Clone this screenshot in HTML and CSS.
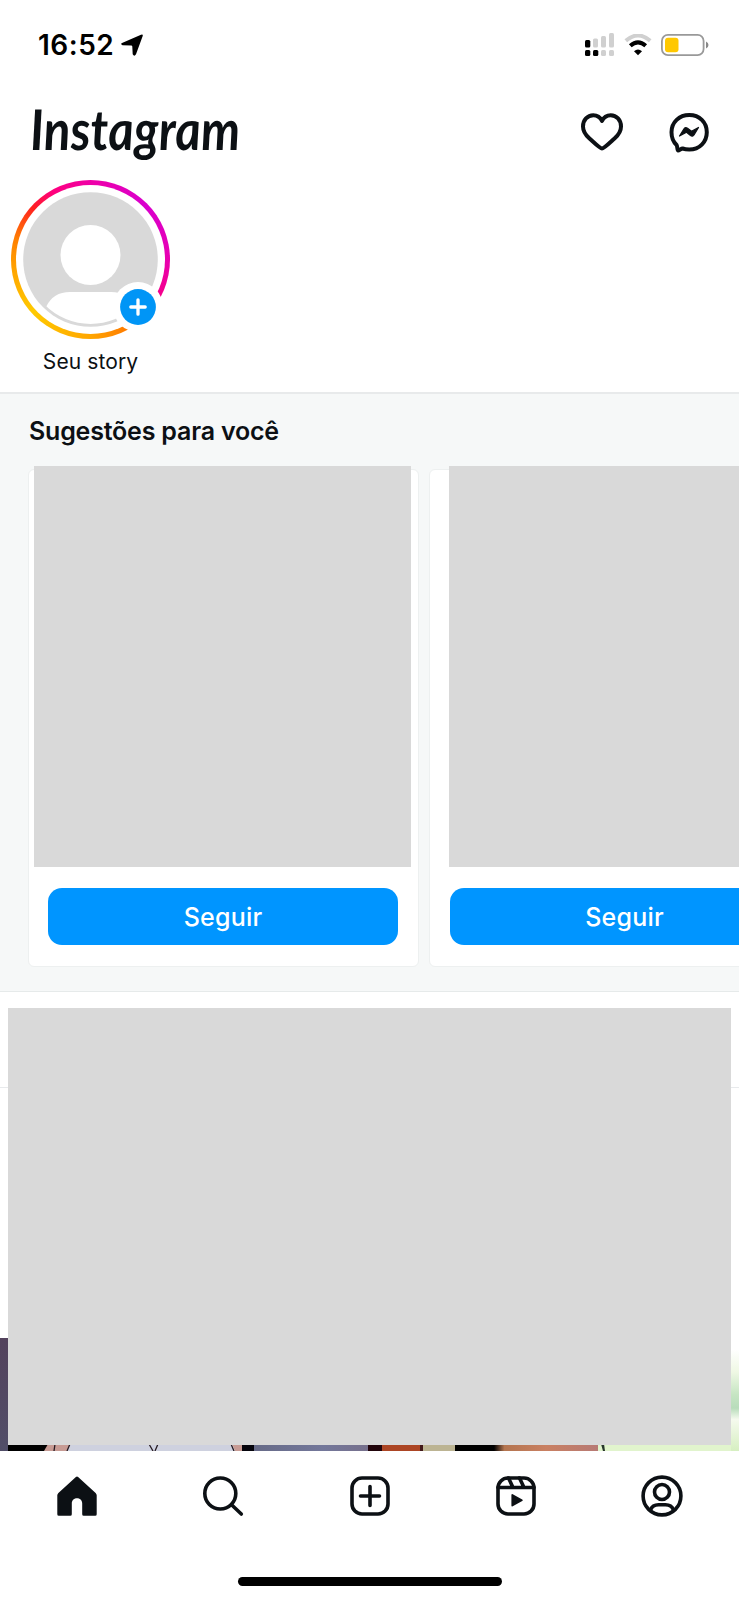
FILE: index.html
```html
<!DOCTYPE html>
<html lang="pt-BR">
<head>
<meta charset="utf-8">
<title>Instagram</title>
<link rel="stylesheet" href="styles.css">
</head>
<body>
<div class="screen">
  <div class="statusbar">
    <div class="clock"><span class="time">16:52</span>
      <svg class="location" viewBox="0 0 22 22"><path d="M20 .7Q22.200-.3 21.700 2L15 20.300Q13.300 23 11.700 20.300L11.300 12.500Q11.200 11.500 10.200 11.400L1.500 11.200Q-1 10.200 1 8.900Z"/></svg>
    </div>
    <div class="indicators">
      <svg class="signal" viewBox="0 0 30 24">
        <g fill="#d0d0d0"><rect x="8" y="5.500" width="5" height="9" rx="1.500"/><rect x="16" y="3" width="5" height="11.500" rx="1.500"/><rect x="24" y="0" width="5" height="14.500" rx="1.500"/><rect x="16" y="17" width="5" height="6" rx="1.500"/><rect x="24" y="17" width="5" height="6" rx="1.500"/></g>
        <g fill="#000"><rect x="0" y="7" width="5.300" height="7.500" rx="1.500"/><rect x="0" y="17" width="5.300" height="6" rx="1.500"/><rect x="8" y="17" width="5.300" height="6" rx="1.500"/></g>
      </svg>
      <svg class="wifi" viewBox="0 0 28 22" fill="none">
        <path d="M1.800 6.800Q14-3.800 26.200 6.800" stroke="#d0d0d0" stroke-width="4"/>
        <path d="M6.300 11.800Q14 4.800 21.700 11.800" stroke="#000" stroke-width="4"/>
        <path d="M10 17.200Q14 13.800 18 17.200L14 21.200Z" fill="#000"/>
      </svg>
      <svg class="battery" viewBox="0 0 48 22">
        <rect x=".9" y=".9" width="41.700" height="20.200" rx="6" fill="#fff" stroke="#999" stroke-width="1.800"/>
        <rect x="4" y="3.800" width="13.500" height="14.400" rx="3" fill="#ffc800"/>
        <path d="M45 7.500Q47.500 8.500 47.500 11T45 14.500Z" fill="#888"/>
      </svg>
    </div>
  </div>

  <header class="header">
    <svg class="wordmark" viewBox="0 0 208 66"><text transform="translate(-1 46) skewX(3)" textLength="210" lengthAdjust="spacingAndGlyphs">Instagram</text></svg>
    <div class="actions">
      <svg class="heart" viewBox="0 0 42 38"><path d="M21 35.500C19 35.500 14 30.500 8.500 25.500C4.500 22 2 18.500 2 13.500C2 7 6.500 2.300 12.300 2.300C16.300 2.300 19.200 4.200 21 8C22.800 4.200 25.700 2.300 29.700 2.300C35.500 2.300 40 7 40 13.500C40 18.500 37.500 22 33.500 25.500C28 30.500 23 35.500 21 35.500Z"/></svg>
      <svg class="messenger" viewBox="0 0 40 40"><path d="M20.300 2C30.400 2 37.800 9.300 37.800 19.200S30.400 36.500 20.300 36.500C17.500 36.500 15.500 36.200 13.500 35.500C12 35.500 10.300 37.600 9.100 37.500C8.200 37.300 8.500 33.500 7.600 32C4.300 28.800 2.500 24.500 2.500 19.200C2.500 9.300 10.200 2 20.300 2Z"/><path class="bolt" d="M10.500 23L15 15.800Q16.500 13.800 18.500 15.300L22.500 18.300L29.500 14.500L25 22Q23.500 24 21.500 22.500L17.500 19.300Z"/></svg>
    </div>
  </header>

  <section class="stories">
    <div class="story">
      <div class="ring">
        <svg class="avatar" viewBox="0 0 149 149">
          <defs><clipPath id="inner"><circle cx="74.500" cy="74.500" r="64.500"/></clipPath></defs>
          <circle cx="74.500" cy="74.500" r="74.500" fill="#fff"/>
          <circle cx="74.500" cy="74.500" r="67.300" fill="#d9d9d9"/>
          <circle cx="74.500" cy="70" r="30" fill="#fff"/>
          <path clip-path="url(#inner)" d="M30 122Q37 107 54 107H95Q112 107 119 122V142H30Z" fill="#fff"/>
        </svg>
        <svg class="add" viewBox="0 0 50 50"><circle cx="25" cy="25" r="25" fill="#fff"/><circle cx="25" cy="25" r="17.900" fill="#0095f6"/><path d="M25 17.800V32.200M17.800 25H32.200" stroke="#fff" stroke-width="3.300" stroke-linecap="round"/></svg>
      </div>
      <span class="story-name">Seu story</span>
    </div>
  </section>

  <section class="suggestions">
    <h2>Sugestões para você</h2>
    <div class="cards">
      <article class="card"><div class="cover"></div><button>Seguir</button></article>
      <article class="card second"><div class="cover"></div><button>Seguir</button></article>
    </div>
  </section>

  <main class="feed">
    <div class="post-header"></div>
    <svg class="photo" viewBox="0 0 739 113" preserveAspectRatio="none">
      <defs>
        <linearGradient id="wall" x2="0" y2="1"><stop stop-color="#53425c"/><stop offset="1" stop-color="#514e68"/></linearGradient>
        <linearGradient id="metal"><stop stop-color="#676b88"/><stop offset=".6" stop-color="#73779a"/><stop offset="1" stop-color="#77708c"/></linearGradient>
        <linearGradient id="skin"><stop stop-color="#000"/><stop offset=".1" stop-color="#b47550"/><stop offset=".5" stop-color="#c98062"/><stop offset="1" stop-color="#b77a75"/></linearGradient>
        <linearGradient id="leaves" x2="0" y2="1"><stop stop-color="#fff"/><stop offset=".1" stop-color="#fff"/><stop offset=".3" stop-color="#eff8e4"/><stop offset=".5" stop-color="#c6e5c3"/><stop offset=".62" stop-color="#b8dcbb"/><stop offset=".72" stop-color="#f5faee"/><stop offset="1" stop-color="#d6efc1"/></linearGradient>
      </defs>
      <rect width="9" height="113" fill="url(#wall)"/>
      <rect x="8" y="106" width="41" height="7" fill="#000"/>
      <path d="M48 106H71L67 113H44Z" fill="#c79b94"/>
      <path d="M70 106H232L235 113H67Z" fill="#ced1df"/>
      <path d="M232 106H242V113H235Z" fill="#c79b94"/>
      <path d="M55 106L54 113M70 106L67 113M149 106L153 113M158 106L155 113M231 106L234 113" stroke="#261b22" stroke-width="1.300"/>
      <rect x="242" y="106" width="12" height="7" fill="#05040c"/>
      <rect x="254" y="106" width="115" height="7" fill="url(#metal)"/>
      <rect x="368" y="106" width="14" height="7" fill="#21040b"/>
      <rect x="382" y="106" width="39" height="7" fill="#ac4524"/>
      <rect x="420" y="106" width="3" height="7" fill="#411719"/>
      <rect x="423" y="106" width="32" height="7" fill="#bcb493"/>
      <rect x="455" y="106" width="43" height="7" fill="#000"/>
      <rect x="494" y="106" width="104" height="7" fill="url(#skin)"/>
      <rect x="598" y="106" width="141" height="7" fill="#e1f4cd"/>
      <path d="M601 106H604L605 113H603Z" fill="#27352c"/>
      <rect x="731" width="8" height="113" fill="url(#leaves)"/>
    </svg>
    <div class="placeholder"></div>
  </main>

  <nav class="tabbar">
    <div class="tabs">
      <svg viewBox="0 0 42 42"><path d="M19.900 2Q21 .9 22.100 2L39.600 18Q40.700 19.200 40.700 20.300V39.200Q40.700 40.700 39.200 40.700H27.700Q26.200 40.700 26.200 39.200V28.500C26.200 21.500 15.800 21.500 15.800 28.500V39.200Q15.800 40.700 14.300 40.700H2.800Q1.300 40.700 1.300 39.200V20.300Q1.300 19.200 2.400 18Z" fill="#0c1014"/></svg>
      <svg class="line" viewBox="0 0 42 42"><circle cx="18.300" cy="18.500" r="15.500"/><path d="M29.800 30L39.300 39"/></svg>
      <svg class="line" viewBox="0 0 42 42"><rect x="3" y="3" width="36" height="36" rx="10"/><path d="M21 11.500V30.500M11.500 21H30.500"/></svg>
      <svg class="line" viewBox="0 0 42 42"><rect x="3" y="3" width="36" height="36" rx="10"/><path d="M3 12.500H39M13.500 3L18 12.500M24.500 3L29 12.500"/><path d="M17.300 20L26.800 25.300L17.300 30.500Z" fill="#0c1014" stroke-width="1.800" stroke-linejoin="round"/></svg>
      <svg class="line" viewBox="0 0 42 42"><circle cx="21" cy="21" r="18.900"/><circle cx="21" cy="17" r="7.500"/><path d="M9.500 35Q11.500 29.800 17.500 29.800H24.500Q30.500 29.800 32.500 35"/></svg>
    </div>
    <div class="home-indicator"></div>
  </nav>
</div>
</body>
</html>
```
FILE: styles.css
```css
* { box-sizing: border-box; }
body { margin: 0; background: #fff; color: #0c1014; font-family: Inter, "Liberation Sans", sans-serif; }
svg { display: block; flex: none; }
.screen { width: 739px; height: 1600px; display: flex; flex-direction: column; overflow: hidden; background: #fff; }
.statusbar { height: 88px; display: flex; justify-content: space-between; align-items: center; padding: 2px 30px 0 38px; color: #000; }
.clock { display: flex; align-items: center; gap: 7px; }
.time { font-size: 28px; font-weight: 600; line-height: 34px; letter-spacing: .5px; }
.location { width: 22px; height: 22px; }
.indicators { display: flex; align-items: center; gap: 9px; }
.signal { width: 30px; height: 24px; }
.wifi { width: 28px; height: 22px; }
.battery { width: 48px; height: 22px; }
.header { height: 92px; display: flex; justify-content: space-between; align-items: flex-start; padding: 16px 30px 0 32px; }
.wordmark { width: 208px; height: 66px; overflow: visible; }
.wordmark text { font: italic 700 56px Lato, sans-serif; fill: #0c1014; }
.actions { display: flex; gap: 46px; padding-top: 9px; }
.heart { width: 42px; height: 38px; }
.messenger { width: 40px; height: 40px; }
.heart path, .messenger path { fill: none; stroke: #0c1014; stroke-width: 4; stroke-linejoin: round; }
.messenger .bolt { fill: #0c1014; stroke-width: 1.2; }
.stories { height: 212px; padding-left: 11px; }
.story { width: 159px; display: flex; flex-direction: column; align-items: center; }
.ring { position: relative; width: 159px; height: 159px; border-radius: 50%; padding: 5px; background: conic-gradient(#ef00a7 0deg, #d900ce 45deg, #e600b5 85deg, #f5008a 118deg, #ff7800 150deg, #ffa600 180deg, #ffca00 228deg, #ffa700 260deg, #ff8000 285deg, #ff2020 312deg, #ff007b 330deg, #ef00a7 360deg); }
.avatar { width: 149px; height: 149px; }
.add { position: absolute; left: 102px; top: 102px; width: 50px; height: 50px; }
.story-name { margin-top: 9px; font-size: 21px; line-height: 28px; letter-spacing: .1px; }
.suggestions { height: 600px; padding: 21px 0 0 27.5px; background: #f6f8f8; border-top: 2px solid #e8eaeb; border-bottom: 1px solid #e6eaea; overflow: hidden; }
h2 { margin: 0; padding-left: 1.5px; font-size: 25px; line-height: 32px; font-weight: 600; letter-spacing: -.2px; }
.cards { display: flex; gap: 10px; margin-top: 22px; }
.card { flex: none; width: 391.5px; height: 498px; padding: 0 6px; border: 1px solid #edf0f0; border-radius: 6px; background: #fff; }
.cover { width: 377px; height: 401px; margin: -4px 0 0 -.5px; background: #d9d9d9; }
.card button { display: flex; align-items: center; justify-content: center; width: 350px; height: 57px; margin: 21px 0 0 13.5px; padding: 0; border: 0; border-radius: 14px; background: #0095ff; color: #fff; font: 500 25px Inter, sans-serif; letter-spacing: .2px; }
.second .cover { margin-left: 13px; }
.feed { height: 459px; display: grid; grid-template: 459px / 739px; }
.feed > * { grid-area: 1 / 1; }
.post-header { height: 96px; border-bottom: 1px solid #e8eaec; }
.photo { align-self: end; width: 739px; height: 113px; }
.placeholder { margin: 16px 8px 6px; background: #d9d9d9; }
.tabbar { height: 149px; display: flex; flex-direction: column; justify-content: space-between; align-items: center; padding: 23.5px 0 14px; background: #fff; }
.tabs { display: flex; justify-content: space-between; width: 627px; }
.tabs svg { width: 42px; height: 42px; }
.line { fill: none; stroke: #0c1014; stroke-width: 3.6; stroke-linecap: round; }
.home-indicator { width: 264px; height: 9px; border-radius: 5px; background: #000; }
```
